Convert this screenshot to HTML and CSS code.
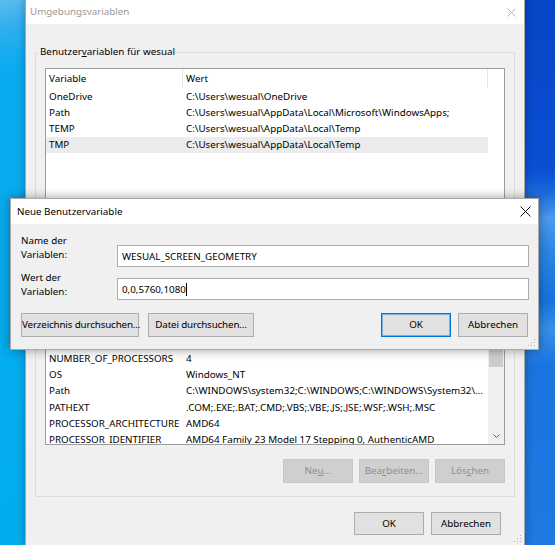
FILE: index.html
```html
<!DOCTYPE html>
<html lang="de">
<head>
    <meta charset="UTF-8">
    <title>Umgebungsvariablen</title>
    <link rel="stylesheet" href="styles.css">
</head>
<body>
<div class="desktop">

    <!-- main dialog, inactive behind the modal -->
    <div class="window main">
        <div class="titlebar inactive">
            <span class="title">Umgebungsvariablen</span>
            <span class="close">
                <svg width="9" height="9" viewBox="0 0 9 9"><path d="M0.5 0.5L8.5 8.5M8.5 0.5L0.5 8.5" stroke="currentColor" stroke-width="1"/></svg>
            </span>
        </div>
        <div class="body">
            <fieldset class="group">
                <legend>Benutzer<u>v</u>ariablen für wesual</legend>
                <div class="listview">
                    <div class="lv-body">
                        <div class="lv-head"><span class="c1">Variable</span><span class="c2">Wert</span></div>
                        <div class="lv-row"><span class="c1">OneDrive</span><span class="c2">C:\Users\wesual\OneDrive</span></div>
                        <div class="lv-row"><span class="c1">Path</span><span class="c2">C:\Users\wesual\AppData\Local\Microsoft\WindowsApps;</span></div>
                        <div class="lv-row"><span class="c1">TEMP</span><span class="c2">C:\Users\wesual\AppData\Local\Temp</span></div>
                        <div class="lv-row selected"><span class="c1">TMP</span><span class="c2">C:\Users\wesual\AppData\Local\Temp</span></div>
                    </div>
                    <div class="vscroll empty"></div>
                </div>
                <div class="btn-row">
                    <button class="btn" disabled><u>N</u>eu...</button>
                    <button class="btn" disabled><u>B</u>earbeiten...</button>
                    <button class="btn" disabled><u>L</u>öschen</button>
                </div>
            </fieldset>

            <fieldset class="group">
                <legend><u>S</u>ystemvariablen</legend>
                <div class="listview">
                    <div class="lv-body">
                        <div class="lv-head"><span class="c1">Variable</span><span class="c2">Wert</span></div>
                        <div class="lv-row"><span class="c1">ComSpec</span><span class="c2">C:\WINDOWS\system32\cmd.exe</span></div>
                        <div class="lv-row"><span class="c1">DriverData</span><span class="c2">C:\Windows\System32\Drivers\DriverData</span></div>
                        <div class="lv-row"><span class="c1">NUMBER_OF_PROCESSORS</span><span class="c2">4</span></div>
                        <div class="lv-row"><span class="c1">OS</span><span class="c2">Windows_NT</span></div>
                        <div class="lv-row"><span class="c1">Path</span><span class="c2">C:\WINDOWS\system32;C:\WINDOWS;C:\WINDOWS\System32\...</span></div>
                        <div class="lv-row"><span class="c1">PATHEXT</span><span class="c2">.COM;.EXE;.BAT;.CMD;.VBS;.VBE;.JS;.JSE;.WSF;.WSH;.MSC</span></div>
                        <div class="lv-row"><span class="c1">PROCESSOR_ARCHITECTURE</span><span class="c2">AMD64</span></div>
                        <div class="lv-row"><span class="c1">PROCESSOR_IDENTIFIER</span><span class="c2">AMD64 Family 23 Model 17 Stepping 0, AuthenticAMD</span></div>
                    </div>
                    <div class="vscroll">
                        <span class="sb-arrow">
                            <svg width="7" height="4" viewBox="0 0 7 4"><path d="M0.5 3.5L3.5 0.5L6.5 3.5" fill="none" stroke="currentColor"/></svg>
                        </span>
                        <span class="sb-thumb"></span>
                        <span class="sb-track"></span>
                        <span class="sb-arrow">
                            <svg width="7" height="4" viewBox="0 0 7 4"><path d="M0.5 0.5L3.5 3.5L6.5 0.5" fill="none" stroke="currentColor"/></svg>
                        </span>
                    </div>
                </div>
                <div class="btn-row">
                    <button class="btn" disabled>Ne<u>u</u>...</button>
                    <button class="btn" disabled>Bea<u>r</u>beiten...</button>
                    <button class="btn" disabled>Lös<u>c</u>hen</button>
                </div>
            </fieldset>

            <div class="dlg-buttons">
                <button class="btn ok">OK</button>
                <button class="btn">Abbrechen</button>
            </div>
        </div>
        <svg class="grip" width="8" height="8" viewBox="0 0 8 8">
            <rect x="6" y="0" width="1" height="1"/><rect x="3" y="3" width="1" height="1"/><rect x="6" y="3" width="1" height="1"/>
            <rect x="0" y="6" width="1" height="1"/><rect x="3" y="6" width="1" height="1"/><rect x="6" y="6" width="1" height="1"/>
        </svg>
    </div>

    <!-- modal: new user variable -->
    <div class="window dialog">
        <div class="titlebar">
            <span class="title">Neue Benutzervariable</span>
            <span class="close">
                <svg width="11" height="11" viewBox="0 0 11 11"><path d="M0.5 0.5L10.5 10.5M10.5 0.5L0.5 10.5" stroke="currentColor" stroke-width="1"/></svg>
            </span>
        </div>
        <div class="body form">
            <div class="fields">
                <label class="field-label">Name der<br>Variablen:</label>
                <div class="textbox first">WESUAL_SCREEN_GEOMETRY</div>
                <label class="field-label">Wert der<br>Variablen:</label>
                <div class="textbox second">0,0,5760,1080<span class="caret"></span></div>
            </div>
            <div class="form-buttons">
                <button class="btn browse-dir">Verzeichnis durchsuchen...</button>
                <button class="btn browse-file">Datei durchsuchen...</button>
                <button class="btn default">OK</button>
                <button class="btn">Abbrechen</button>
            </div>
        </div>
        <svg class="grip" width="8" height="8" viewBox="0 0 8 8">
            <rect x="6" y="0" width="1" height="1"/><rect x="3" y="3" width="1" height="1"/><rect x="6" y="3" width="1" height="1"/>
            <rect x="0" y="6" width="1" height="1"/><rect x="3" y="6" width="1" height="1"/><rect x="6" y="6" width="1" height="1"/>
        </svg>
    </div>

</div>
</body>
</html>
```

FILE: styles.css
```css
body {
    margin: 0;
    font-family: "Noto Sans", "Segoe UI", sans-serif;
    font-size: 9.8px;
    color: #000;
}

.desktop {
    position: relative;
    width: 555px;
    height: 545px;
    overflow: hidden;
    background:
        linear-gradient(165deg, #5cbdf0 0, #2eaeef 30px, #0aabef 70px, #00adef 100%) left top / 26px 100% no-repeat,
        linear-gradient(180deg, #0645c6 0, #0a4fd3 170px, #1a69dc 192px, #4b9bec 218px, #2c86e6 250px, #1672dd 300px, #3790e9 330px, #1a74df 365px, #1e79e0 545px);
}

/* windows */
.window {
    position: absolute;
    background: #f0f0f0;
    border: 1px solid #a9a9a9;
    box-shadow: 0 0 8px rgba(0, 0, 0, 0.3);
}

.main {
    left: 25px;
    top: -1px;
    width: 498px;
    height: 545px;
}

.dialog {
    left: 10px;
    top: 198px;
    width: 527px;
    box-shadow: 0 0 10px rgba(0, 0, 0, 0.38);
}

.titlebar {
    display: flex;
    align-items: center;
    height: 24px;
    padding-left: 4px;
    background: #fff;
}
.dialog .titlebar {
    height: 25px;
    padding-left: 6px;
}
.title {
    flex: 1;
    line-height: 14px;
}
.titlebar.inactive .title { color: #999; }
.titlebar .close {
    display: flex;
    align-items: center;
    justify-content: center;
    width: 26px;
    height: 100%;
    color: #111;
}
.titlebar.inactive .close { color: #b4b4b4; }

.grip {
    position: absolute;
    right: 2px;
    bottom: 2px;
    fill: #b0b0b0;
}

/* main dialog body */
.main .body {
    padding-top: 21px;
}

.group {
    margin: 0 9px;
    padding: 9px 9px 13px;
    border: 1px solid #dcdcdc;
    min-width: 0;
}
.group + .group {
    margin-top: 8px;
}
.group legend {
    margin-left: -7px;
    padding: 0 2px;
    line-height: 14px;
}

.listview {
    display: flex;
    height: 145px;
    border: 1px solid #9c9c9c;
    background: #fff;
}
.lv-body {
    width: 442px;
    overflow: hidden;
}
.lv-head, .lv-row {
    display: flex;
    align-items: center;
    white-space: nowrap;
}
.lv-head {
    height: 19px;
}
.lv-row {
    height: 16.2px;
}
.lv-row.selected {
    background: #ececec;
}
.c1, .c2 {
    box-sizing: border-box;
    padding-left: 3px;
    overflow: hidden;
}
.c1 { width: 137px; }
.c2 { width: 305px; }
.lv-head .c1, .lv-head .c2 {
    height: 100%;
    display: flex;
    align-items: center;
    border-right: 1px solid #e5e5e5;
}

.vscroll {
    display: flex;
    flex-direction: column;
    width: 16px;
    background: #f0f0f0;
}
.vscroll.empty { background: #fff; }
.sb-arrow {
    display: flex;
    align-items: center;
    justify-content: center;
    height: 17px;
    color: #606060;
}
.sb-thumb {
    height: 51px;
    margin: 0 1px;
    background: #cdcdcd;
}
.sb-track { flex: 1; }

/* buttons */
.btn {
    box-sizing: border-box;
    width: 70px;
    height: 24px;
    padding: 0;
    border: 1px solid #adadad;
    background: #e1e1e1;
    font: inherit;
    color: #000;
    line-height: 14px;
    white-space: nowrap;
}
.btn:disabled {
    background: #cfcfcf;
    border-color: #c6c6c6;
    color: #8f8f8f;
}

.btn-row {
    display: flex;
    justify-content: flex-end;
    gap: 6px;
    margin-top: 14px;
}

.dlg-buttons {
    display: flex;
    justify-content: flex-end;
    gap: 7px;
    margin: 15px 23px 0 0;
}
.dlg-buttons .btn { height: 23px; }

/* new variable form */
.form {
    padding: 10px 9px 12px 10px;
}
.fields {
    display: grid;
    grid-template-columns: 96px 1fr;
    row-gap: 4px;
    align-items: start;
}
.field-label {
    line-height: 14px;
}
.textbox {
    box-sizing: border-box;
    display: flex;
    align-items: center;
    height: 22px;
    padding-left: 4px;
    border: 1px solid #acacac;
    background: #fff;
    white-space: nowrap;
}
.textbox.first { margin-top: 11px; }
.textbox.second { margin-top: 7px; }
.caret {
    width: 1px;
    height: 13px;
    background: #000;
}

.form-buttons {
    display: flex;
    gap: 7px;
    margin-top: 13px;
    padding-right: 1px;
}
.browse-dir, .browse-file { letter-spacing: -0.15px; }
.browse-dir { width: 118px; margin-right: 2px; }
.browse-file { width: 106px; margin-right: auto; }
.btn.default {
    border-color: #0078d7;
    box-shadow: inset 0 0 0 1px rgba(0, 120, 215, 0.45);
}
```
